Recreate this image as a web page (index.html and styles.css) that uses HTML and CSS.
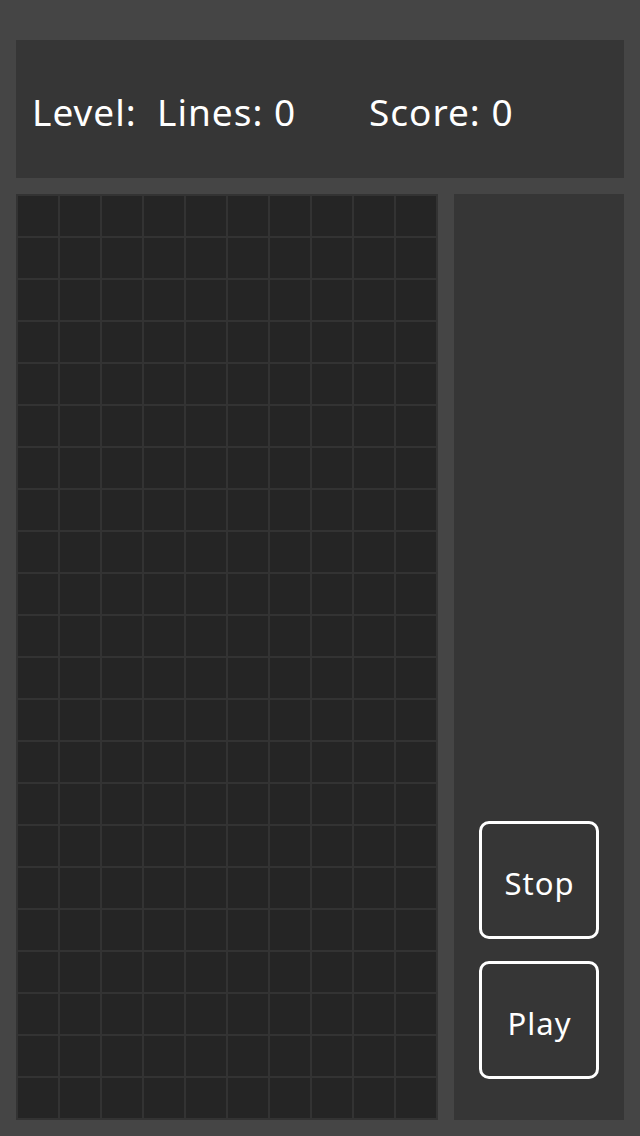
FILE: index.html
```html
<!DOCTYPE html>
<html lang="en">
<head>
    <meta charset="UTF-8">
    <meta name="viewport" content="width=device-width, initial-scale=1.0">
    <title>Tetris</title>
<link rel="stylesheet" href="styles.css">
</head>
<body>
    <div class="stats">
        <span class="stat level">Level:</span>
        <span class="stat lines">Lines: 0</span>
        <span class="stat score">Score: 0</span>
    </div>

    <div class="game">
        <div class="board" id="board"></div>

        <div class="side">
            <button class="ctl">Stop</button>
            <button class="ctl">Play</button>
        </div>
    </div>

<script>
    var board = document.getElementById("board");
    for (var i = 0; i < 10 * 22; i++) {
        var cell = document.createElement("div");
        cell.className = "cell";
        board.appendChild(cell);
    }
</script>
</body>
</html>
```

FILE: styles.css
```css
body {
    background-color: #454545;
    color: #fff;
    font-family: "Comic Sans MS", "Noto Sans", sans-serif;
    margin: 0;
    padding: 40px 16px 16px;
    height: 1136px;
    box-sizing: border-box;
    display: flex;
    flex-direction: column;
    gap: 16px;
}

/* Panel ya juu */
.stats {
    background-color: #363636;
    height: 138px;
    display: flex;
    align-items: center;
    padding-left: 16px;
    padding-top: 4px;
    box-sizing: border-box;
    font-size: 37px;
    letter-spacing: 1px;
}

.stat {
    white-space: nowrap;
}

.level {
    width: 125px;
}

.lines {
    width: 212px;
}

.game {
    display: flex;
    gap: 16px;
    flex: 1;
}

.board {
    background-color: #333;
    padding: 2px;
    display: grid;
    grid-template-columns: repeat(10, 40px);
    grid-template-rows: repeat(22, 40px);
    gap: 2px;
}

.cell {
    background-color: #252525;
}

.side {
    flex: 1;
    background-color: #363636;
    display: flex;
    flex-direction: column;
    justify-content: flex-end;
    align-items: center;
    gap: 22px;
    padding-bottom: 41px;
}

.ctl {
    width: 120px;
    height: 118px;
    background: transparent;
    border: 3px solid #fff;
    border-radius: 10px;
    color: #fff;
    font-family: inherit;
    font-size: 31px;
    letter-spacing: 1px;
    cursor: pointer;
    padding: 5px 0 0 1px;
}
```
